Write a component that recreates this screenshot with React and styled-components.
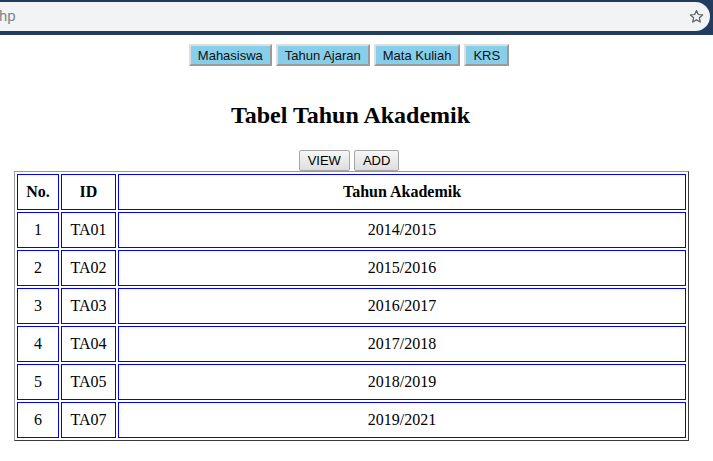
import React from 'react';
import styled, { createGlobalStyle } from 'styled-components';

const GlobalStyle = createGlobalStyle`
  body {
    margin: 0;
    background: #fff;
    font-family: "Liberation Serif", "Times New Roman", serif;
    color: #000;
  }
`;

const TopBar = styled.div`
  height: 35px;
  background-color: #223c5e;
  padding-top: 2px;
  box-sizing: border-box;
`;

const AddressField = styled.div`
  width: 710px;
  height: 29px;
  background-color: #f1f3f4;
  border-radius: 0 15px 15px 0;
  display: flex;
  align-items: center;
  justify-content: space-between;
  padding-right: 6px;
  box-sizing: border-box;
  font-family: Roboto, "Liberation Sans", sans-serif;
  font-size: 15px;
  color: #80868b;
`;

const Url = styled.span`
  margin-left: -1px;
  line-height: 1;
`;

const Page = styled.div`
  width: 703px;
`;

const ButtonRow = styled.div`
  display: flex;
  justify-content: center;
  gap: 4px;
  padding-right: 5px;
  margin-top: ${p => p.$top || 0}px;
`;

const NavButton = styled.button`
  height: 22px;
  box-sizing: border-box;
  padding: 0 7px;
  background-color: #87ceeb;
  border: 2px solid;
  border-color: #dedede #9a9a9a #9a9a9a #dedede;
  font-family: "Liberation Sans", Arial, sans-serif;
  font-size: 13px;
  color: #111;
  cursor: pointer;
`;

const ActionButton = styled.button`
  height: 21px;
  box-sizing: border-box;
  padding: 0 8px;
  background: linear-gradient(#f6f6f6, #dedede);
  border: 1px solid #a6a6a6;
  border-radius: 2px;
  font-family: "Liberation Sans", Arial, sans-serif;
  font-size: 13px;
  color: #000;
  cursor: pointer;
`;

const Title = styled.h2`
  margin: 35px 0 21px;
  padding-right: 2px;
  font-size: 24px;
  line-height: 28px;
  font-weight: bold;
  text-align: center;
`;

const Table = styled.table`
  width: 675px;
  margin: 0 auto;
  table-layout: fixed;
  border-collapse: separate;
  border-spacing: 2px;
  border: 1px solid;
  border-color: #9a9a9a #3a3a3a #3a3a3a #9a9a9a;
  font-size: 16px;
`;

const Th = styled.th`
  width: ${p => p.$w}px;
  height: 36px;
  box-sizing: border-box;
  padding: 0;
  border: 1px solid #0000ff;
  font-weight: bold;
  text-align: center;
`;

const Td = styled.td`
  height: 36px;
  box-sizing: border-box;
  padding: 0;
  border: 1px solid #0000ff;
  text-align: center;
`;

const StarIcon = () => (
  <svg width="15" height="15" viewBox="0 0 24 24" fill="none" stroke="#5f6368" strokeWidth="2" strokeLinejoin="round">
    <path d="M12 2.5l2.9 6.3 6.9.7-5.2 4.6 1.5 6.8L12 17.4l-6.1 3.5 1.5-6.8-5.2-4.6 6.9-.7z" />
  </svg>
);

const rows = [
  ['1', 'TA01', '2014/2015'],
  ['2', 'TA02', '2015/2016'],
  ['3', 'TA03', '2016/2017'],
  ['4', 'TA04', '2017/2018'],
  ['5', 'TA05', '2018/2019'],
  ['6', 'TA07', '2019/2021'],
];

export default function App() {
  return (
    <>
      <GlobalStyle />
      <TopBar>
        <AddressField>
          <Url>hp</Url>
          <StarIcon />
        </AddressField>
      </TopBar>
      <Page>
        <ButtonRow $top={9}>
          <NavButton>Mahasiswa</NavButton>
          <NavButton>Tahun Ajaran</NavButton>
          <NavButton>Mata Kuliah</NavButton>
          <NavButton>KRS</NavButton>
        </ButtonRow>
        <Title>Tabel Tahun Akademik</Title>
        <ButtonRow>
          <ActionButton>VIEW</ActionButton>
          <ActionButton>ADD</ActionButton>
        </ButtonRow>
        <Table>
          <thead>
            <tr>
              <Th $w={42}>No.</Th>
              <Th $w={55}>ID</Th>
              <Th $w={568}>Tahun Akademik</Th>
            </tr>
          </thead>
          <tbody>
            {rows.map(r => (
              <tr key={r[1]}>
                <Td>{r[0]}</Td>
                <Td>{r[1]}</Td>
                <Td>{r[2]}</Td>
              </tr>
            ))}
          </tbody>
        </Table>
      </Page>
    </>
  );
}
